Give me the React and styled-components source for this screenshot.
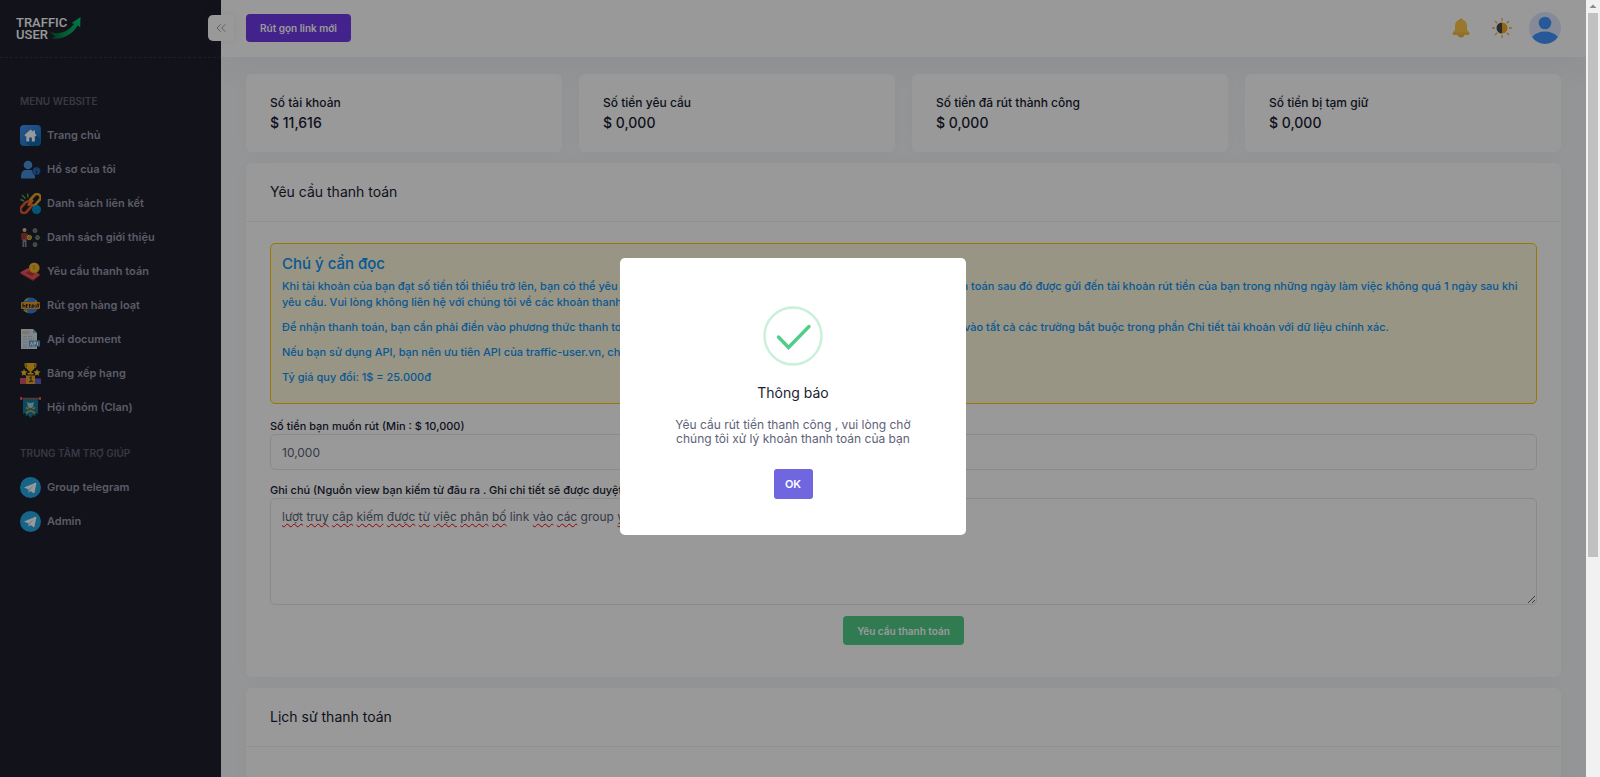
import { useState } from 'react';
import styled, { createGlobalStyle } from 'styled-components';
import { ChevronsLeft } from 'lucide-react';

const colors = {
  sidebar: '#1e1e2d',
  page: '#f5f8fa',
  text: '#181c32',
  muted: '#9899ac',
  border: '#eff2f5',
  input: '#e4e6ef',
  primary: '#0b93f5',
  purple: '#7239ea',
  green: '#50cd89',
};

const GlobalStyle = createGlobalStyle`
  *, *::before, *::after {
    box-sizing: border-box;
  }

  body {
    margin: 0;
    font-family: Inter, "Noto Sans", sans-serif;
    font-size: 12px;
    color: ${colors.text};
    background: ${colors.page};
  }

  button, input, textarea {
    font-family: inherit;
  }

  h1, h2, h3, p {
    margin: 0;
    font-weight: 400;
  }
`;

const Shell = styled.div`
  display: flex;
  height: 100vh;
  overflow: hidden;
`;

const Viewport = styled.div`
  position: relative;
  display: flex;
  flex: 1;
  min-width: 0;
  overflow: hidden;
`;

const Sidebar = styled.aside`
  display: flex;
  flex-direction: column;
  flex: none;
  width: 221px;
  background: ${colors.sidebar};
`;

const Brand = styled.div`
  position: relative;
  z-index: 2;
  display: flex;
  align-items: center;
  height: 58px;
  padding: 0 16px;
  border-bottom: 1px dashed #333342;
`;

const ToggleButton = styled.button`
  position: absolute;
  top: 15px;
  right: -13px;
  display: flex;
  align-items: center;
  justify-content: center;
  width: 26px;
  height: 26px;
  padding: 0;
  border: 0;
  border-radius: 5px;
  background: #fff;
  color: ${colors.muted};
  box-shadow: 0 0 10px rgba(113, 121, 136, .1);
`;

const Menu = styled.nav`
  display: flex;
  flex-direction: column;
  padding: 27px 20px;
`;

const MenuTitle = styled.h2`
  padding: ${(props) => (props.spaced ? '21px' : '8px')} 0 9px;
  font-size: 10px;
  line-height: 16px;
  font-weight: 600;
  color: #5e5e73;
  text-transform: uppercase;
`;

const MenuLink = styled.a`
  display: flex;
  align-items: center;
  gap: 6px;
  height: 34px;
  font-size: 11px;
  font-weight: 600;
  color: ${colors.muted};
  text-decoration: none;

  svg {
    flex: none;
  }
`;

const Main = styled.div`
  display: flex;
  flex-direction: column;
  flex: 1;
  min-width: 0;
`;

const Header = styled.header`
  display: flex;
  align-items: center;
  justify-content: space-between;
  flex: none;
  height: 57px;
  padding: 0 25px 1px;
  background: #fff;
  box-shadow: 0 10px 30px rgba(82, 63, 105, .05);
`;

const HeaderTools = styled.div`
  display: flex;
  align-items: center;
  gap: 14px;
`;

const IconButton = styled.button`
  display: flex;
  align-items: center;
  justify-content: center;
  min-width: 27px;
  padding: 0;
  border: 0;
  background: none;
`;

const SolidButton = styled.button`
  height: ${(props) => (props.tall ? '29px' : '28px')};
  padding: 0 14px;
  border: 0;
  border-radius: 4px;
  background: ${(props) => props.color};
  color: #fff;
  font-size: 10px;
  font-weight: 600;
`;

const Content = styled.main`
  display: flex;
  flex-direction: column;
  gap: 11px;
  padding: 17px 25px 0;
`;

const Stats = styled.section`
  display: grid;
  grid-template-columns: repeat(4, 1fr);
  gap: 17px;
`;

const Card = styled.section`
  flex: none;
  background: #fff;
  border-radius: 6px;
  box-shadow: 0 0 20px rgba(76, 87, 125, .02);
`;

const StatCard = styled(Card)`
  height: 78px;
  padding: 19px 24px;
`;

const StatLabel = styled.p`
  font-size: 12px;
  line-height: 20px;
  font-weight: 500;
`;

const StatValue = styled.p`
  font-size: 14px;
  line-height: 20px;
  font-weight: 500;
`;

const CardHeader = styled.header`
  display: flex;
  align-items: center;
  height: 59px;
  padding: 0 24px 1px;
  border-bottom: 1px solid ${colors.border};
`;

const CardTitle = styled.h1`
  font-size: 14px;
  line-height: 20px;
`;

const CardBody = styled.div`
  display: flex;
  flex-direction: column;
  padding: 21px 24px 32px;
`;

const Notice = styled.div`
  height: 161px;
  margin-bottom: 2px;
  padding: 10px 11px;
  border: 1px solid #ffc700;
  border-radius: 5px;
  background: #fff8dd;
  color: ${colors.primary};
`;

const NoticeTitle = styled.h3`
  margin-bottom: 4px;
  font-size: 15px;
  line-height: 20px;
  font-weight: 500;
`;

const NoticeText = styled.p`
  margin-bottom: 9px;
  font-size: 11px;
  line-height: 16px;
  font-weight: 500;
`;

const Field = styled.div`
  display: flex;
  flex-direction: column;
  padding-top: 11px;
`;

const Label = styled.label`
  height: 17px;
  font-size: 11px;
  line-height: 18px;
  font-weight: 500;
`;

const TextInput = styled.input`
  height: 36px;
  padding: 0 11px;
  border: 1px solid ${colors.input};
  border-radius: 5px;
  background: #fff;
  font-size: 12px;
  color: #5e6278;
  outline: 0;
`;

const NoteBox = styled.div`
  position: relative;
  display: flex;
`;

const NoteArea = styled.textarea`
  flex: 1;
  height: 107px;
  padding: 9px 11px;
  border: 1px solid ${colors.input};
  border-radius: 5px;
  background: #fff;
  font-size: 12px;
  line-height: 18px;
  color: #5e6278;
  outline: 0;
  resize: vertical;
`;

// mirrors the textarea to underline the flagged words
const SpellLayer = styled.div`
  position: absolute;
  inset: 0;
  padding: 9px 11px;
  border: 1px solid transparent;
  font-size: 12px;
  line-height: 18px;
  color: transparent;
  pointer-events: none;
`;

const Flagged = styled.span`
  text-decoration: underline wavy #ff0000 1px;
  text-decoration-skip-ink: none;
  text-underline-offset: 2px;
`;

const Actions = styled.div`
  display: flex;
  justify-content: center;
  padding-top: 11px;
`;

const Backdrop = styled.div`
  position: absolute;
  inset: 0;
  z-index: 10;
  display: flex;
  align-items: center;
  justify-content: center;
  padding-top: 15px;
  background: rgba(0, 0, 0, .4);
`;

const Dialog = styled.div`
  display: flex;
  flex-direction: column;
  align-items: center;
  width: 346px;
  padding: 48px 40px 36px;
  border-radius: 5px;
  background: #fff;
  text-align: center;
`;

const DialogTitle = styled.h2`
  margin-top: 16px;
  font-size: 14px;
  line-height: 22px;
`;

const DialogText = styled.p`
  width: 240px;
  margin: 14px 0 23px;
  font-size: 12px;
  line-height: 14px;
  color: #5e6278;
`;

const OkButton = styled.button`
  width: 39px;
  height: 30px;
  padding: 0;
  border: 0;
  border-radius: 3px;
  background: #7066e0;
  color: #fff;
  font-size: 11px;
  font-weight: 600;
`;

const ScrollTrack = styled.div`
  display: flex;
  flex-direction: column;
  align-items: center;
  flex: none;
  width: 14px;
  background: #f1f1f1;
`;

const ScrollArrow = styled.svg`
  flex: none;
  width: 14px;
  height: 13px;
`;

const ScrollThumb = styled.div`
  width: 10px;
  height: 70%;
  background: #c1c1c1;
`;

function Logo() {
  return <svg width="66" height="28" viewBox="0 0 66 28" role="img" aria-label="Traffic User">
    <defs>
      <linearGradient id="swoosh" x1="0" x2="1">
        <stop offset="0" stopColor="#045c34" />
        <stop offset=".5" stopColor="#0a9a50" />
        <stop offset="1" stopColor="#00c878" />
      </linearGradient>
    </defs>
    <g fill="#fff" fontFamily="Roboto, sans-serif" fontSize="13" fontWeight="500">
      <text x="0" y="12">TRAFFIC</text>
      <text x="0" y="24">USER</text>
    </g>
    <path d="M34 16.500c7 3.500 17 1.500 24-7.500l-2.500-1 9-6-.3 10.500-2.400-2.200c-6 10.200-16.800 15.200-26.800 12.700l4.500-1.500c-2-1-4-2.500-5.500-5z" fill="url(#swoosh)" />
  </svg>;
}

function HomeIcon() {
  return <svg width="21" height="21" viewBox="0 0 21 21">
    <defs>
      <linearGradient id="home" x1="0" y1="0" x2="1" y2="1">
        <stop offset="0" stopColor="#4b8ff5" />
        <stop offset="1" stopColor="#0873b5" />
      </linearGradient>
    </defs>
    <rect width="21" height="21" rx="4" fill="url(#home)" />
    <path d="m15 8 5 5v4l-4 4h-6l-5-5z" fill="#075a98" opacity=".5" />
    <path d="M10.500 4.500 4.500 10l1 1.500.8-.5v5.500h3v-4h2.500v4h3V11l.8.5 1-1.500-1.600-1.500V5.500h-1.800v1.200z" fill="#fff" />
  </svg>;
}

function ProfileIcon() {
  return <svg width="21" height="21" viewBox="0 0 21 21">
    <circle cx="8" cy="6" r="4.300" fill="#4696dc" />
    <path d="M1 19.500c0-5 1-8 4-8.500h6c2.500.5 4 3 4 8.500z" fill="#4390d8" />
    <circle cx="16.500" cy="12" r="4" fill="#2070c4" stroke="#1e1e2d" strokeWidth=".5" />
    <path d="M16.500 9.500v.8M16.500 11.500v3" stroke="#0f3c72" strokeWidth="1.300" />
  </svg>;
}

function LinkIcon() {
  return <svg width="21" height="21" viewBox="0 0 21 21" fill="none">
    <path d="M.5 6.500 4 8M2 2l3.500 3.500M7.500.5l.5 4" stroke="#52b043" strokeWidth="1.400" />
    <rect x="8.500" y="3.300" width="13" height="7" rx="3.500" transform="rotate(-48 15 6.800)" stroke="#eda525" strokeWidth="2.600" />
    <rect x="-.5" y="10.800" width="13" height="7" rx="3.500" transform="rotate(-48 6 14.300)" stroke="#e35b30" strokeWidth="2.600" />
    <path d="m8.500 12 4-4.500" stroke="#f27c2b" strokeWidth="2.300" strokeLinecap="round" />
    <circle cx="16.500" cy="16.500" r="4.500" fill="#0592cc" />
    <path d="M12.500 16.500h8M16.500 12.500v8" stroke="#087bae" strokeWidth=".7" />
  </svg>;
}

function ReferralIcon() {
  return <svg width="21" height="21" viewBox="0 0 21 21">
    <circle cx="4.500" cy="3" r="2" fill="#d8b99f" />
    <path d="M.8 7q3.700-2.500 7.200 0l1 3-1.500 1V13h-6z" fill="#9e3b36" />
    <path d="M2.500 12.500h4V20H5v-5h-.7v5H2.500z" fill="#8a8a8e" />
    <circle cx="9.300" cy="10.500" r="2.200" fill="#b78e38" stroke="#e5bd57" />
    <g fill="#68706b" stroke="#9ea5a0" strokeWidth=".6">
      <circle cx="15" cy="3.500" r="2" />
      <circle cx="17.500" cy="10.500" r="2" />
      <circle cx="15" cy="17.500" r="2" />
    </g>
    <path d="M13.500 5h3M16 12h3M13.500 19h3" stroke="#3fbd79" strokeWidth=".8" />
  </svg>;
}

function PaymentIcon() {
  return <svg width="21" height="21" viewBox="0 0 21 21">
    <path d="m0 12.500 8-4.500 12 6.500-7 5.500z" fill="#bd343a" />
    <path d="m0 11.500 8-4.500 12 6.500-7 5z" fill="#ec5658" />
    <path d="m5 12 4-2 6 3-3 2z" fill="#b93840" />
    <circle cx="14.500" cy="7" r="5.200" fill="#d99a21" />
    <circle cx="14" cy="6.500" r="4.800" fill="#f0b62e" />
    <path d="M14 4v5M12.500 5.500h3M12.500 7.500h3" stroke="#c68a1c" strokeWidth=".7" />
  </svg>;
}

function BulkIcon() {
  return <svg width="21" height="21" viewBox="0 0 21 21">
    <circle cx="10.500" cy="10.500" r="8" fill="#3b7fe0" />
    <path d="M4 6q2-3 5-3.500L7 6zM3 15l4-.5 1 3.500q-3.500-1-5-3zM16 5l2 3h-4z" fill="#a3b83e" />
    <rect x="1" y="7" width="19" height="7" rx="1" fill="#e89d30" />
    <g stroke="#2b2521" strokeWidth="1" fill="none">
      <path d="M3 8.500v4M3 10.500h2v2M6.500 9v3.500h1M5.800 10h2.500M9.500 9v3.500h1M9 10h2M12 10v3M12 10h2v2h-2M15.500 9.800v.8M15.500 11.800v.7M16.500 12.500l1-4M18 12.500l1-4" />
    </g>
  </svg>;
}

function DocumentIcon() {
  return <svg width="21" height="21" viewBox="0 0 21 21">
    <path d="M1 0h12l4 4v16H1z" fill="#d4e0e9" />
    <path d="M13 0v4h4z" fill="#91aabd" />
    <path d="m4.500 2-1.500 1.500L4.500 5M7.500 2 9 3.500 7.500 5M6.500 2 5.500 5" fill="none" stroke="#dc8b3c" strokeWidth=".8" />
    <path d="M3 7.500h10M3 10h11M3 13h6M3 16h5M3 18h9" stroke="#a9b9c5" strokeWidth=".8" strokeDasharray="4 1" />
    <rect x="9" y="11.500" width="11" height="6" rx=".5" fill="#5d9fca" />
    <path d="m10.500 16.500 1-3.500 1 3.500M14 16.500V13h1.500v2H14M17.500 13v3.500" fill="none" stroke="#f2f8fc" />
  </svg>;
}

function RankingIcon() {
  return <svg width="21" height="21" viewBox="0 0 21 21">
    <path d="M7 1H5q0 4 3 4M14 1h2q0 4-3 4" fill="none" stroke="#d99d1c" strokeWidth="1.300" />
    <path d="M6.500 0h8q.5 7-3 8v2h2v1.500h-6V10h2V8q-3.500-1-3-8z" fill="#f2b81e" />
    <path id="rank-star" d="m4 6 1 2.300 2.500.3-1.900 1.700.5 2.500L4 11.500l-2.200 1.300.5-2.500L.5 8.600 3 8.300z" fill="#f3c52f" />
    <use href="#rank-star" x="13" />
    <path d="M0 15h6v6H0z" fill="#d9536e" />
    <path d="M15 15.500h6v5.500h-6z" fill="#6163c6" />
    <path d="M6 12.500h9V21H6z" fill="#eba52a" />
    <path d="m9.500 15 1.500-1v4.500M9 18.500h4" fill="none" stroke="#514221" strokeWidth="1.200" />
  </svg>;
}

function ClanIcon() {
  return <svg width="21" height="21" viewBox="0 0 21 21">
    <path d="M3 2h15v15l-2-1-1 3-2-1-2.500 3L8 18l-2 1-1-3-2 1z" fill="#137b9e" />
    <path d="M0 1.500h21" stroke="#9c594d" strokeWidth="1.500" />
    <path d="M0 0h2v3H0zM19 0h2v3h-2z" fill="#d95b4c" />
    <path d="M7 5q3 2 7 0l-1 5-2.500 1.500L8 10z" fill="#a9c8d1" />
    <path d="m6 10.500 2.500 1.500M15 10.500 12.500 12M6 16l4.500-2.500L15 16" fill="none" stroke="#d8a235" strokeWidth="1.500" />
  </svg>;
}

function TelegramIcon() {
  return <svg width="21" height="21" viewBox="0 0 21 21">
    <circle cx="10.500" cy="10.500" r="10.500" fill="#27a7e5" />
    <path d="m4 10.500 11.500-4.700q1-.3.900.7l-1.900 9q-.2 1-1.100.5L10.500 14l-1.700 1.700-.3-3.200z" fill="#fff" />
    <path d="m8.500 12.500 5.700-5-4.500 5.700-.9 2.500z" fill="#b5d9ee" />
  </svg>;
}

function BellIcon() {
  return <svg width="18" height="20" viewBox="0 0 18 20">
    <circle cx="9" cy="2" r="1.600" fill="#f1b437" />
    <path d="M3 8q0-6 6-6.500Q15 2 15 8v4l2.200 2.200q.8 2.800-1.200 2.800H2Q0 17 .8 14.200L3 12z" fill="#ffc64c" />
    <path d="M1 14.500h16q.5 2.500-1 2.500H2Q.5 17 1 14.500z" fill="#f6bd46" />
    <path d="M5.500 17h7q-.8 2.500-3.500 2.500T5.500 17z" fill="#f0b23a" />
  </svg>;
}

function ThemeIcon() {
  return <svg width="20" height="20" viewBox="0 0 20 20">
    <path d="M10 0v3M10 17v3M0 10h3M17 10h3M3 3l2.200 2.200M14.800 14.800 17 17M17 3l-2.200 2.200M5.200 14.800 3 17" stroke="#f0b92f" strokeWidth="1.300" />
    <path d="M10 4.500a5.500 5.500 0 0 0 0 11z" fill="#464655" />
    <path d="M10 4.500a5.500 5.500 0 0 1 0 11z" fill="#f3a81c" />
  </svg>;
}

function AvatarIcon() {
  return <svg width="32" height="32" viewBox="0 0 32 32">
    <defs>
      <clipPath id="avatar-clip"><circle cx="16" cy="16" r="16" /></clipPath>
    </defs>
    <circle cx="16" cy="16" r="16" fill="#dfe7fd" />
    <g fill="#4294ff" clipPath="url(#avatar-clip)">
      <circle cx="16" cy="11" r="6.300" />
      <path d="M3 25q5-5.500 13-5.500T29 25q-5 7-13 7T3 25z" />
    </g>
  </svg>;
}

function SuccessIcon() {
  return <svg width="60" height="60" viewBox="0 0 60 60" fill="none">
    <circle cx="30" cy="30" r="28.500" stroke="#c9f0db" strokeWidth="2.400" />
    <path d="m15.500 31 10 10.500 20.500-21" stroke={colors.green} strokeWidth="3.400" strokeLinecap="round" />
  </svg>;
}

const menu = [
  { label: 'Trang chủ', Icon: HomeIcon },
  { label: 'Hồ sơ của tôi', Icon: ProfileIcon },
  { label: 'Danh sách liên kết', Icon: LinkIcon },
  { label: 'Danh sách giới thiệu', Icon: ReferralIcon },
  { label: 'Yêu cầu thanh toán', Icon: PaymentIcon },
  { label: 'Rút gọn hàng loạt', Icon: BulkIcon },
  { label: 'Api document', Icon: DocumentIcon },
  { label: 'Bảng xếp hạng', Icon: RankingIcon },
  { label: 'Hội nhóm (Clan)', Icon: ClanIcon },
];

const support = [
  { label: 'Group telegram', Icon: TelegramIcon },
  { label: 'Admin', Icon: TelegramIcon },
];

const stats = [
  ['Số tài khoản', '$ 11,616'],
  ['Số tiền yêu cầu', '$ 0,000'],
  ['Số tiền đã rút thành công', '$ 0,000'],
  ['Số tiền bị tạm giữ', '$ 0,000'],
];

const notices = [
  'Khi tài khoản của bạn đạt số tiền tối thiểu trở lên, bạn có thể yêu cầu thanh toán bằng cách bấm vào nút bên dưới. Các khoản thanh toán sau đó được gửi đến tài khoản rút tiền của bạn trong những ngày làm việc không quá 1 ngày sau khi yêu cầu. Vui lòng không liên hệ với chúng tôi về các khoản thanh toán.',
  'Để nhận thanh toán, bạn cần phải điền vào phương thức thanh toán và địa chỉ thanh toán của bạn, đồng thời điền đầy đủ thông tin vào tất cả các trường bắt buộc trong phần Chi tiết tài khoản với dữ liệu chính xác.',
  'Nếu bạn sử dụng API, bạn nên ưu tiên API của traffic-user.vn, chúng tôi hỗ trợ tốt nhất.',
  'Tỷ giá quy đổi: 1$ = 25.000đ',
];

const correctWords = ['link', 'group'];

function MenuItems({ items }) {
  return items.map(({ label, Icon }) => <MenuLink href="#" key={label}>
    <Icon />
    {label}
  </MenuLink>);
}

export default function App() {
  const [open, setOpen] = useState(true);
  const [amount, setAmount] = useState('10,000');
  const [note, setNote] = useState('lượt truy câp kiếm được từ việc phân bố link vào các group y');

  return <>
    <GlobalStyle />
    <Shell>
      <Viewport>
        <Sidebar>
          <Brand>
            <Logo />
            <ToggleButton aria-label="Thu gọn menu"><ChevronsLeft size={16} strokeWidth={1.5} /></ToggleButton>
          </Brand>
          <Menu>
            <MenuTitle>Menu website</MenuTitle>
            <MenuItems items={menu} />
            <MenuTitle spaced>Trung tâm trợ giúp</MenuTitle>
            <MenuItems items={support} />
          </Menu>
        </Sidebar>
        <Main>
          <Header>
            <SolidButton color={colors.purple}>Rút gọn link mới</SolidButton>
            <HeaderTools>
              <IconButton aria-label="Thông báo"><BellIcon /></IconButton>
              <IconButton aria-label="Giao diện"><ThemeIcon /></IconButton>
              <IconButton aria-label="Tài khoản"><AvatarIcon /></IconButton>
            </HeaderTools>
          </Header>
          <Content>
            <Stats>
              {stats.map(([label, value]) => <StatCard key={label}>
                <StatLabel>{label}</StatLabel>
                <StatValue>{value}</StatValue>
              </StatCard>)}
            </Stats>
            <Card>
              <CardHeader><CardTitle>Yêu cầu thanh toán</CardTitle></CardHeader>
              <CardBody>
                <Notice>
                  <NoticeTitle>Chú ý cần đọc</NoticeTitle>
                  {notices.map((text) => <NoticeText key={text}>{text}</NoticeText>)}
                </Notice>
                <Field>
                  <Label htmlFor="amount">Số tiền bạn muốn rút (Min : $ 10,000)</Label>
                  <TextInput id="amount" value={amount} onChange={(e) => setAmount(e.target.value)} />
                </Field>
                <Field>
                  <Label htmlFor="note">Ghi chú (Nguồn view bạn kiếm từ đâu ra . Ghi chi tiết sẽ được duyệt)</Label>
                  <NoteBox>
                    <NoteArea id="note" spellCheck={false} value={note} onChange={(e) => setNote(e.target.value)} />
                    <SpellLayer aria-hidden="true">
                      {note.split(' ').map((word, i) => <span key={i}>
                        {correctWords.includes(word) ? word : <Flagged>{word}</Flagged>}
                        {' '}
                      </span>)}
                    </SpellLayer>
                  </NoteBox>
                </Field>
                <Actions>
                  <SolidButton tall color={colors.green}>Yêu cầu thanh toán</SolidButton>
                </Actions>
              </CardBody>
            </Card>
            <Card>
              <CardHeader><CardTitle>Lịch sử thanh toán</CardTitle></CardHeader>
              <CardBody />
            </Card>
          </Content>
        </Main>
        {open && <Backdrop>
          <Dialog role="dialog" aria-modal="true" aria-labelledby="dialog-title">
            <SuccessIcon />
            <DialogTitle id="dialog-title">Thông báo</DialogTitle>
            <DialogText>Yêu cầu rút tiền thanh công , vui lòng chờ chúng tôi xử lý khoản thanh toán của bạn</DialogText>
            <OkButton onClick={() => setOpen(false)}>OK</OkButton>
          </Dialog>
        </Backdrop>}
      </Viewport>
      <ScrollTrack>
        <ScrollArrow viewBox="0 0 14 13"><path d="m3.500 8 3.500-3.500L10.500 8z" fill="#8a8a8a" /></ScrollArrow>
        <ScrollThumb />
      </ScrollTrack>
    </Shell>
  </>;
}
